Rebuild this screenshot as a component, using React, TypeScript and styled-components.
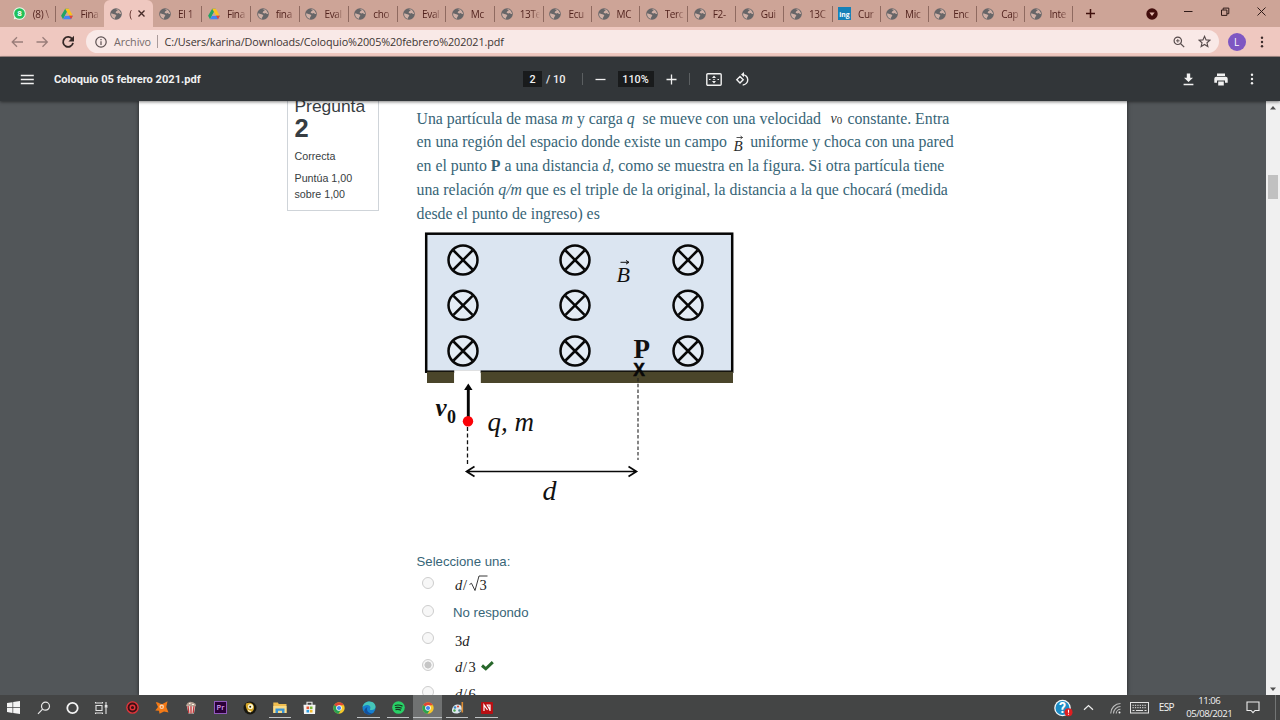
import React from "react";
import styled, { createGlobalStyle } from "styled-components";

const Global = createGlobalStyle`
  * { box-sizing: border-box; }
  body { margin: 0; overflow: hidden; background: #525659; }
  svg { display: block; flex: none; }
`;

const uiFont = `"Open Sans", "Noto Sans", sans-serif`;

const Screen = styled.div`
  width: 1280px;
  height: 720px;
  display: flex;
  flex-direction: column;
  overflow: hidden;
`;

/* ---------- Browser chrome ---------- */
const TabStrip = styled.div`
  height: 27px;
  flex: none;
  display: flex;
  padding-left: 6.7px;
  background: #cda497;
`;

const Tab = styled.div<{ $w: number; $active?: boolean; $line?: boolean }>`
  width: ${(p) => p.$w}px;
  flex: none;
  display: flex;
  align-items: center;
  padding-left: 6px;
  background: ${(p) => (p.$active ? "#efc8c0" : "transparent")};
  border-radius: 6px 6px 0 0;
  position: relative;
  &::after {
    content: "";
    display: ${(p) => (p.$line ? "block" : "none")};
    position: absolute;
    right: -0.5px;
    top: 6px;
    width: 1px;
    height: 16px;
    background: #8f6a60;
  }
`;

const TabTitle = styled.span<{ $w?: number }>`
  width: ${(p) => p.$w ?? 20}px;
  margin-left: 7px;
  overflow: hidden;
  white-space: nowrap;
  font: 10px/16px ${uiFont};
  letter-spacing: -0.35px;
  color: #52231e;
  mask-image: linear-gradient(90deg, #000 55%, transparent 100%);
`;

const StripControls = styled.div`
  flex: 1;
  display: flex;
  align-items: center;
`;

const AddressBar = styled.div`
  height: 30px;
  flex: none;
  display: flex;
  align-items: center;
  padding-left: 10px;
  background: #efc8c0;
  border-bottom: 1px solid #a48b87;
`;

const NavButtons = styled.div`
  width: 76px;
  display: flex;
  align-items: center;
  gap: 11px;
`;

const Omnibox = styled.div`
  width: 1133px;
  height: 23px;
  display: flex;
  align-items: center;
  padding: 0 8px 0 9px;
  border-radius: 12px;
  background: #f9e9e7;
  font: 10.8px/20px ${uiFont};
  color: #3d3533;
  white-space: nowrap;
`;

const Scheme = styled.span`
  width: 42.5px;
  margin-left: 7px;
  letter-spacing: -0.1px;
  color: #75696a;
`;

const Divider = styled.i<{ $h: number; $c: string }>`
  width: 1px;
  height: ${(p) => p.$h}px;
  background: ${(p) => p.$c};
`;

const Url = styled.span`
  flex: 1;
  margin-left: 7px;
  letter-spacing: -0.095px;
`;

const Avatar = styled.span`
  width: 18px;
  height: 18px;
  margin: 0 10.5px 0 8.5px;
  border-radius: 50%;
  background: #7e57c2;
  color: #fff;
  font: 10px/18px ${uiFont};
  text-align: center;
`;

/* ---------- PDF toolbar ---------- */
const PdfBar = styled.div`
  height: 44px;
  flex: none;
  display: flex;
  align-items: center;
  padding-left: 20px;
  background: #323639;
  color: #f1f1f1;
  font: 500 11.4px/16px Roboto, sans-serif;
  box-shadow: 0 1px 3px rgba(0, 0, 0, 0.5);
  position: relative;
`;

const DocName = styled.span`
  width: 489px;
  padding: 2px 0 0 20px;
  font-weight: 700;
  font-size: 11.1px;
`;

const Field = styled.span<{ $w: number }>`
  width: ${(p) => p.$w}px;
  height: 16px;
  background: #191b1c;
  text-align: center;
  font-size: 10.8px;
  line-height: 17px;
`;

const PageTotal = styled.span`
  width: 36px;
  padding: 1px 0 0 4px;
  font-size: 11px;
`;

const Spacer = styled.span<{ $w: number }>`
  width: ${(p) => p.$w}px;
  flex: none;
`;

/* ---------- Document ---------- */
const Viewer = styled.div`
  height: 594px;
  flex: none;
  display: flex;
  overflow: hidden;
  background: #525659;
`;

const Gutter = styled.div<{ $w: number }>`
  width: ${(p) => p.$w}px;
  flex: none;
`;

const Paper = styled.main`
  width: 988px;
  flex: none;
  display: flex;
  align-items: flex-start;
  padding-left: 148px;
  background: #fff;
  box-shadow: 0 0 4px rgba(0, 0, 0, 0.6);
  font-family: "Liberation Sans", Arial, sans-serif;
`;

const QuestionCard = styled.aside`
  width: 92px;
  height: 110px;
  overflow: hidden;
  padding-left: 6.5px;
  border: 1px solid #cfd4d9;
  border-top: 0;
  color: #373d42;
  font-size: 10.7px;
  line-height: 16px;
`;

const QuestionTitle = styled.div`
  height: 13px;
  font-size: 17.4px;
  line-height: 20px;
  margin-top: -5px;
`;

const QuestionNumber = styled.div`
  font-size: 25.5px;
  font-weight: 700;
  line-height: 30px;
  margin-top: 3.5px;
`;

const CardText = styled.div<{ $gap: number }>`
  margin-top: ${(p) => p.$gap}px;
`;

const Content = styled.section`
  margin-left: 37.5px;
  padding-top: 5.5px;
  color: #376577;
`;

const Line = styled.p`
  height: 23.85px;
  margin: 0;
  white-space: pre;
  font: 15.83px/23.85px "Liberation Serif", "Times New Roman", serif;
`;

const Formula = styled.svg`
  display: inline-block;
  vertical-align: top;
  overflow: visible;
`;

const Figure = styled.svg`
  margin-top: 4.3px;
  margin-left: -6.5px;
`;

const Prompt = styled.div`
  margin-top: 24px;
  height: 19px;
  font-size: 13.2px;
  line-height: 20px;
`;

const Choice = styled.div<{ $h: number }>`
  height: ${(p) => p.$h}px;
  display: flex;
  align-items: center;
  padding-left: 5.5px;
  font-size: 13.2px;
`;

const Radio = styled.span<{ $on?: boolean }>`
  width: 12px;
  height: 12px;
  margin-right: 19px;
  border: 1px solid #cdcdcd;
  border-radius: 50%;
  background: ${(p) =>
    p.$on ? "radial-gradient(circle, #c6c6c6 0 3.2px, #f6f6f6 3.8px)" : "#f7f7f7"};
`;

const ChoiceLabel = styled.span`
  padding-top: 3px;
`;

const Scrollbar = styled.div`
  width: 14px;
  margin-left: auto;
  display: flex;
  flex-direction: column;
  align-items: center;
  padding: 5px 0 4px;
  background: #f0f0f0;
`;

const Thumb = styled.i`
  width: 10px;
  height: 24px;
  margin: 65px 0 auto;
  background: #c1c1c1;
`;

/* ---------- Taskbar ---------- */
const Taskbar = styled.footer`
  height: 25px;
  flex: none;
  display: flex;
  background: #444545;
  color: #f2f2f2;
`;

const TaskSlot = styled.div<{ $open?: boolean; $active?: boolean }>`
  width: 29.56px;
  flex: none;
  display: flex;
  align-items: center;
  justify-content: center;
  background: ${(p) => (p.$active ? "#707272" : "transparent")};
  position: relative;
  &::after {
    content: "";
    display: ${(p) => (p.$open ? "block" : "none")};
    position: absolute;
    left: ${(p) => (p.$active ? 0 : 3.5)}px;
    right: ${(p) => (p.$active ? 0 : 3.5)}px;
    bottom: 2px;
    height: 1.5px;
    background: #bfc2c4;
  }
`;

const Apps = styled.div`
  display: flex;
  width: 1054px;
  margin-left: -0.8px;
`;

const Tray = styled.div`
  flex: 1;
  display: flex;
  align-items: center;
  font: 9.6px/12.6px ${uiFont};
`;

const Lang = styled.span`
  width: 26.5px;
  margin-left: 9.5px;
  font-size: 10px;
  letter-spacing: -0.6px;
`;

const Clock = styled.div`
  width: 48px;
  text-align: center;
  white-space: nowrap;
  font-size: 9.6px;
  letter-spacing: -0.5px;
`;

/* ---------- Icons ---------- */
const Globe = () => (
  <svg width="12" height="12" viewBox="0 0 12 12">
    <circle cx="6" cy="6" r="5.800" fill="#676668" />
    <path d="M1.300 5.200 3.400 6l2 .5 1 1.300-1.200 1.100-.2 1.800C2.800 10.300 1.200 8.500 1.100 6.500zM5.500 1.400l1.700.1.400.9-1.500 1-.5 1.300 1.700.7 1.600-.300 1 1 1.200-.100C10.600 3.600 9.200 1.200 6.500 1z" fill="#cfb0a6" />
  </svg>
);

const DriveIcon = () => (
  <svg width="12" height="12" viewBox="0 0 12 12">
    <path d="M4.200.8h3.600L4 7.600 2 11.200.1 7.800z" fill="#21a464" />
    <path d="M4.200.8h3.600l4.100 7H8.100z" fill="#fbc31c" />
    <path d="M4.100 7.800h7.800L10 11.200H2z" fill="#4285f4" />
    <path d="M8.100 7.800h3.800L10 11.200z" fill="#e94335" />
    <path d="M6 4.300 7.900 7.800H4z" fill="#cda497" />
  </svg>
);

const WhatsAppIcon = () => (
  <svg width="13" height="13" viewBox="0 0 13 13">
    <circle cx="6.500" cy="6.500" r="6.300" fill="#e9fbea" />
    <path d="M.7 12.500 1.500 9l2 2.400z" fill="#e9fbea" />
    <circle cx="6.500" cy="6.500" r="5.300" fill="#20c05a" />
    <text x="6.500" y="9.300" textAnchor="middle" fontFamily="Roboto, sans-serif" fontWeight="700" fontSize="8" fill="#fff">8</text>
  </svg>
);

const IngIcon = () => (
  <svg width="13" height="13" viewBox="0 0 13 13">
    <rect width="13" height="13" fill="#1581b8" />
    <text x="6.500" y="9.600" textAnchor="middle" fontFamily="Open Sans, sans-serif" fontWeight="700" fontSize="6.800" fill="#fff">ing</text>
  </svg>
);

const ChromeIcon = () => (
  <svg width="12" height="12" viewBox="0 0 12 12">
    <circle cx="6" cy="6" r="5.700" fill="#f6c829" />
    <path d="M6 6 1.100 3.100A5.700 5.700 0 0 1 11 3.300H6z" fill="#e04535" />
    <path d="M6 6 1.100 3.100A5.700 5.700 0 0 0 5.500 11.700L8.300 7.300z" fill="#2aa352" />
    <circle cx="6" cy="6" r="2.800" fill="#fff" />
    <circle cx="6" cy="6" r="2.100" fill="#4585ee" />
  </svg>
);

const tabs: [string, string][] = [
  ["wa", "(8) \\"], ["drive", "Fina"], ["active", "("], ["globe", "El 1"],
  ["drive", "Fina"], ["globe", "fina"], ["globe", "Eval"], ["globe", "cho"],
  ["globe", "Eval"], ["globe", "Mc"], ["globe", "13Te"], ["globe", "Ecu"],
  ["globe", "MC"], ["globe", "Terc"], ["globe", "F2-"], ["globe", "Gui"],
  ["globe", "13C"], ["ing", "Cur"], ["globe", "Mic"], ["globe", "Enc"],
  ["globe", "Cap"], ["globe", "Inte"],
];

const tabIcon = (kind: string) =>
  kind === "wa" ? <WhatsAppIcon /> : kind === "drive" ? <DriveIcon /> : kind === "ing" ? <IngIcon /> : <Globe />;

function BrowserTabs() {
  return (
    <TabStrip>
      {tabs.map(([kind, title], i) => (
        <Tab key={i} $w={i < 11 ? 48.8 : 48.1} $active={kind === "active"} $line={i !== 1 && i !== 2}>
          {tabIcon(kind)}
          {kind === "active" ? (
            <>
              <TabTitle $w={4}>{title}</TabTitle>
              <Spacer $w={3.5} />
              <svg width="9" height="9" viewBox="0 0 9 9">
                <path d="m1.500 1.500 6 6m0-6-6 6" stroke="#472c29" strokeWidth="1.400" />
              </svg>
            </>
          ) : (
            <TabTitle>{title}</TabTitle>
          )}
        </Tab>
      ))}
      <StripControls>
        <Spacer $w={12.5} />
        <svg width="11" height="11" viewBox="0 0 11 11"><path d="M5.500 1v9M1 5.500h9" stroke="#40100d" strokeWidth="1.500" /></svg>
        <Spacer $w={50.5} />
        <svg width="12" height="12" viewBox="0 0 12 12">
          <circle cx="6" cy="6" r="5.700" fill="#420d0c" />
          <path d="M3.400 4.500h5.200L6 8z" fill="#e3b9ae" />
        </svg>
        <Spacer $w={25.5} />
        <svg width="90" height="18" viewBox="0 0 90 18" fill="none" stroke="#2f1b18">
          <path d="M0 6.500h8.500M37.500 5h5.400v5.400h-5.400zM39.200 4.800V3.100h5.600v5.600h-1.700M73.500 2.500l8 8m0-8-8 8" />
        </svg>
      </StripControls>
    </TabStrip>
  );
}

const Kebab = ({ color }: { color: string }) => (
  <svg width="4" height="12" viewBox="0 0 4 12" fill={color}>
    <circle cx="2" cy="1.700" r="1.200" /><circle cx="2" cy="6" r="1.200" /><circle cx="2" cy="10.300" r="1.200" />
  </svg>
);

function BrowserToolbar() {
  return (
    <AddressBar>
      <NavButtons>
        <svg width="14" height="12" viewBox="0 0 14 12" fill="none" stroke="#997d79" strokeWidth="1.300"><path d="M13 6H2.500M7 1.200 2.200 6 7 10.800" /></svg>
        <svg width="14" height="12" viewBox="0 0 14 12" fill="none" stroke="#997d79" strokeWidth="1.300"><path d="M1.500 6H12M7.500 1.200 12.300 6l-4.800 4.800" /></svg>
        <svg width="16" height="14" viewBox="-1 0 16 14" fill="none" stroke="#352826" strokeWidth="1.800">
          <path d="M11.300 4.200A5 5 0 1 0 12 7.800" /><path d="M13 .8v5.600H7.400z" fill="#352826" stroke="none" />
        </svg>
      </NavButtons>
      <Omnibox>
        <svg width="12" height="12" viewBox="0 0 12 12" fill="none" stroke="#5c5051" strokeWidth="1.200">
          <circle cx="6" cy="6" r="5.200" /><path d="M6 5.300v3.600M6 2.900v1.400" />
        </svg>
        <Scheme>Archivo</Scheme>
        <Divider $h={13} $c="#aa9b9b" />
        <Url>C:/Users/karina/Downloads/Coloquio%2005%20febrero%202021.pdf</Url>
        <svg width="12" height="12" viewBox="0 0 12 12" fill="none" stroke="#574b4c" strokeWidth="1.200">
          <circle cx="4.800" cy="4.800" r="3.700" /><path d="m7.500 7.500 3.700 3.700" /><path d="M3 4.800h3.600M4.800 3v3.600" strokeWidth=".9" />
        </svg>
        <Spacer $w={13.5} />
        <svg width="13" height="13" viewBox="0 0 24 24" fill="none" stroke="#574b4c" strokeWidth="2.100">
          <path d="m12 2.500 2.900 6.500 7 .7-5.300 4.700 1.600 7L12 17.600l-6.200 3.800 1.600-7L2.100 9.700l7-.7z" />
        </svg>
      </Omnibox>
      <Avatar>L</Avatar>
      <Spacer $w={4} />
      <Kebab color="#3b2b29" />
    </AddressBar>
  );
}

function PdfToolbar() {
  return (
    <PdfBar>
      <svg width="14" height="11" viewBox="0 0 14 11" stroke="#f1f1f1" strokeWidth="1.500"><path d="M.8 1.500h13M.8 5.500h13M.8 9.500h13" /></svg>
      <DocName>Coloquio 05 febrero 2021.pdf</DocName>
      <Field $w={19}>2</Field>
      <PageTotal>/&nbsp;10</PageTotal>
      <Spacer $w={3.5} />
      <Divider $h={12} $c="#5b5f61" />
      <Spacer $w={12} />
      <svg width="11" height="11" viewBox="0 0 11 11" stroke="#f1f1f1" strokeWidth="1.300"><path d="M.5 5.500h10" /></svg>
      <Spacer $w={12} />
      <Field $w={36}>110%</Field>
      <Spacer $w={12} />
      <svg width="11" height="11" viewBox="0 0 11 11" stroke="#f1f1f1" strokeWidth="1.300"><path d="M.5 5.500h10M5.500.5v10" /></svg>
      <Spacer $w={12} />
      <Divider $h={12} $c="#5b5f61" />
      <Spacer $w={16} />
      <svg width="16" height="13" viewBox="0 0 16 13">
        <rect x=".8" y=".8" width="14.400" height="11.400" rx="1" fill="none" stroke="#f1f1f1" strokeWidth="1.400" />
        <path d="M8 2.500 10 5H6zM8 10.500 10 8H6zM3 5.900h1.500v1.200H3zM11.500 5.900H13v1.200h-1.500zM7.300 5.900h1.400v1.200H7.300z" fill="#f1f1f1" />
      </svg>
      <Spacer $w={13} />
      <svg width="15" height="15" viewBox="0 0 15 15" fill="none" stroke="#f1f1f1" strokeWidth="1.400">
        <path d="m5 4.500 3.200 3.200L5 10.900 1.800 7.700zM7.400 2.600a5.200 5.200 0 1 1 .3 10.400" /><path d="M9 0v5.200L6 2.600z" fill="#f1f1f1" stroke="none" />
      </svg>
      <Spacer $w={433.5} />
      <svg width="11" height="13" viewBox="0 0 11 13" fill="#f1f1f1"><path d="M3.800.5h3.400v4.300H10L5.500 9 1 4.800h2.800zM.6 10.800h9.800v1.400H.6z" /></svg>
      <Spacer $w={19.5} />
      <svg width="14" height="13" viewBox="0 0 14 13" fill="#f1f1f1">
        <path d="M3 .4h8v2.500H3zM2.300 3.700h9.400a2 2 0 0 1 2 2v4H11V7.500H3v2.200H.3v-4a2 2 0 0 1 2-2z" /><path d="M4.200 8.500h5.600v4H4.200z" />
      </svg>
      <Spacer $w={22.5} />
      <Kebab color="#f1f1f1" />
    </PdfBar>
  );
}

const VectorB = () => (
  <Formula width="11.500" height="23" viewBox="-2.500 0 11.500 23">
    <text x="0" y="20.500" fontFamily="Liberation Serif, serif" fontStyle="italic" fontSize="15" fill="#2a2a2a">B</text>
    <path d="M3 7.500h6m-2-1.500 2 1.500-2 1.500" stroke="#2a2a2a" strokeWidth=".8" fill="none" />
  </Formula>
);

const SpeedSymbol = () => (
  <Formula width="14.500" height="23" viewBox="-1.500 0 14.500 23">
    <g fontFamily="Liberation Serif, serif" fill="#333">
      <text x="0" y="15.500" fontStyle="italic" fontSize="14">v</text>
      <text x="6.300" y="17" fontSize="11">0</text>
    </g>
  </Formula>
);

const fieldXs = [463, 575, 688];
const fieldYs = [260, 305.3, 351];

/* Uniform magnetic field region with the particle's entry point and impact point P */
const FieldDiagram = () => (
  <Figure width="330" height="298" viewBox="410 230 330 298">
    <rect x="426.200" y="233.700" width="306" height="138" fill="#dbe5f1" stroke="#050505" strokeWidth="2.500" />
    <path d="M427 371.800h27.200v11.300H427zM480.600 371.800H733v11.300H480.600z" fill="#4a452a" />
    <path d="M454.200 370.200h26.400V384h-26.400z" fill="#fff" />
    <g stroke="#080808" strokeWidth="2.500" fill="#e3ebf4">
      {fieldYs.flatMap((y) =>
        fieldXs.map((x) => (
          <g key={`${x}-${y}`}>
            <circle cx={x} cy={y} r="14.500" />
            <path d={`M${x - 9.5} ${y - 9.5}l19 19m0-19-19 19`} />
          </g>
        ))
      )}
    </g>
    <g fontFamily="Liberation Serif, serif" fill="#111">
      <text x="616.500" y="281.500" fontStyle="italic" fontSize="22">B</text>
      <text x="633.500" y="357.800" fontWeight="700" fontSize="27">P</text>
      <text x="435.500" y="416" fontWeight="700" fontStyle="italic" fontSize="25">v</text>
      <text x="447" y="422.500" fontWeight="700" fontSize="18">0</text>
      <text x="487.500" y="430.500" fontStyle="italic" fontSize="27">q, m</text>
      <text x="542.500" y="499.800" fontStyle="italic" fontSize="28">d</text>
    </g>
    <text x="633.300" y="376" fontFamily="Liberation Sans, sans-serif" fontWeight="700" fontSize="17.500" fill="#080808" stroke="#080808" strokeWidth=".5">X</text>
    <path d="M620.500 262.300h8m-2.500-1.800 3 1.800-3 1.800" stroke="#111" fill="none" />
    <path d="M467.500 427v38" stroke="#111" strokeWidth="1.300" strokeDasharray="4 2.600" />
    <path d="M638 378v82" stroke="#222" strokeWidth="1.100" strokeDasharray="3.500 2.200" />
    <path d="M468.300 418v-29" stroke="#050505" strokeWidth="2.900" />
    <path d="M468.300 383.500l4.200 6.500h-8.400z" fill="#050505" />
    <circle cx="468" cy="421.300" r="5.200" fill="#fb0207" />
    <path d="M467 471.500h169M474.500 466.500l-8 5 8 5M628.500 466.500l8 5-8 5" stroke="#080808" strokeWidth="1.700" fill="none" />
  </Figure>
);

const MathLabel = ({ text, root, base = 16.5 }: { text: React.ReactNode; root?: boolean; base?: number }) => (
  <svg width="36" height="20" viewBox="0 0 36 20">
    <text x="2" y={base} fontFamily="Liberation Serif, serif" fontSize="14.500" fill="#222">{text}</text>
    {root && (
      <>
        <path d="M16.500 11.500l2-1.200 3.500 7.200 4-14.500h8.500" stroke="#222" strokeWidth=".9" fill="none" />
        <text x="26.500" y={base} fontFamily="Liberation Serif, serif" fontSize="14.500" fill="#222">3</text>
      </>
    )}
  </svg>
);

const It = ({ children }: { children: string }) => <tspan fontStyle="italic">{children}</tspan>;

function Document() {
  return (
    <Viewer>
      <Gutter $w={139} />
      <Paper>
        <QuestionCard>
          <QuestionTitle>Pregunta</QuestionTitle>
          <QuestionNumber>2</QuestionNumber>
          <CardText $gap={5}>Correcta</CardText>
          <CardText $gap={6}>Puntúa 1,00<br />sobre 1,00</CardText>
        </QuestionCard>
        <Content>
          <Line>Una partícula de masa <i>m</i> y carga <i>q</i>  se mueve con una velocidad  <SpeedSymbol /> constante. Entra</Line>
          <Line>en una región del espacio donde existe un campo <VectorB />{"  "}uniforme y choca con una pared</Line>
          <Line>en el punto <b>P</b> a una distancia <i>d,</i> como se muestra en la figura. Si otra partícula tiene</Line>
          <Line>una relación <i>q/m</i> que es el triple de la original, la distancia a la que chocará (medida</Line>
          <Line>desde el punto de ingreso) es</Line>
          <FieldDiagram />
          <Prompt>Seleccione una:</Prompt>
          <Choice $h={24}><Radio /><MathLabel root text={<><It>d</It><tspan x="10">/</tspan></>} /></Choice>
          <Choice $h={31}><Radio /><ChoiceLabel>No respondo</ChoiceLabel></Choice>
          <Choice $h={24}><Radio /><MathLabel base={17.5} text={<>3<It>d</It></>} /></Choice>
          <Choice $h={30}>
            <Radio $on />
            <MathLabel text={<><It>d</It><tspan x="10">/</tspan><tspan x="15.500">3</tspan></>} />
            <Formula width="13" height="13" viewBox="8 -1 13 13"><path d="m1 5.500 3.800 3.300 7-6.600" fill="none" stroke="#27672b" strokeWidth="3" /></Formula>
          </Choice>
          <Choice $h={24}><Radio /><MathLabel text={<><It>d</It><tspan x="10">/</tspan><tspan x="15.500">6</tspan></>} /></Choice>
        </Content>
      </Paper>
      <Scrollbar>
        <svg width="6" height="4" viewBox="0 0 6 4"><path d="M3 0 6 3.500H0z" fill="#505050" /></svg>
        <Thumb />
        <svg width="6" height="4" viewBox="0 0 6 4"><path d="M3 4 6 .5H0z" fill="#505050" /></svg>
      </Scrollbar>
    </Viewer>
  );
}

function WindowsTaskbar() {
  return (
    <Taskbar>
      <Apps>
        <TaskSlot><svg width="13" height="13" viewBox="0 0 13 13" fill="#f4f4f4"><path d="M0 2l5.500-.8v5H0zM6.200 1.100 13 0v6.200H6.200zM0 6.900h5.500v5L0 11.100zM6.200 6.900H13V13l-6.800-1z" /></svg></TaskSlot>
        <TaskSlot><svg width="14" height="14" viewBox="0 0 14 14" fill="none" stroke="#e8e8e8" strokeWidth="1.200"><circle cx="8.500" cy="5.200" r="4" /><path d="M5.600 8.200 1 12.800" /></svg></TaskSlot>
        <TaskSlot><svg width="14" height="14" viewBox="0 0 14 14" fill="none" stroke="#f4f4f4" strokeWidth="1.800"><circle cx="6.500" cy="7" r="5.200" /></svg></TaskSlot>
        <TaskSlot><svg width="18" height="14" viewBox="1.500 0 14 14" fill="none" stroke="#e4e4e4" strokeWidth="1.100"><path d="M.5 2h8M1.500 4.500h6v5h-6zM.5 12h8M1 1v1.500M8 1v1.500M1 11.500V13M8 11.500V13M11.500 1v3M11.500 7v6" /><path d="M10.800 4.500h1.600v1.600h-1.600z" fill="#eee" /></svg></TaskSlot>
        <TaskSlot><svg width="13" height="13" viewBox="0 0 13 13"><circle cx="6.500" cy="6.500" r="6.300" fill="#e3343a" /><circle cx="6.500" cy="6.500" r="4.900" fill="#3e1115" /><circle cx="6.500" cy="6.500" r="2.300" fill="none" stroke="#e3343a" strokeWidth="1.400" /></svg></TaskSlot>
        <TaskSlot><svg width="14" height="13" viewBox="0 0 14 13"><path d="M.8 1.300C3.500.5 5 3.500 7.500 3L12.500.2 11.300 6l2.200 5.500-4.500-1-4.500 2.300-.5-3L.3 9.500 3 6z" fill="#f47a16" /><circle cx="6.700" cy="5.800" r="2.300" fill="#fbd3b0" /><circle cx="6.700" cy="6" r="1" fill="#f47a16" /></svg></TaskSlot>
        <TaskSlot><svg width="12" height="13" viewBox="0 0 12 13"><path d="M1.500 4h9L9 12.500H3.500z" fill="#eadfd7" /><path d="m3 5 .8 7M6 5v7.500M9 5l-.8 7" stroke="#c3363a" strokeWidth="1.300" /><path d="M1 4.500 2.500 2 5 .8l3 .5 2.500 1.500.5 2-4 .7z" fill="#b6a294" /><path d="M4 2.500h1.500M7 3.500h2" stroke="#fff4e2" /></svg></TaskSlot>
        <TaskSlot><svg width="13" height="13" viewBox="0 0 13 13"><rect x=".5" y=".5" width="12" height="12" fill="#2b0038" stroke="#9159bd" /><text x="6.500" y="9.200" textAnchor="middle" fontFamily="Open Sans, sans-serif" fontSize="7.500" fontWeight="600" fill="#d6a0f4">Pr</text></svg></TaskSlot>
        <TaskSlot><svg width="14" height="14" viewBox="0 0 14 14"><circle cx="7" cy="7" r="6.500" fill="#17160f" /><path d="M3 2.500C6 .5 11 2 11 6.500S7 12 5.500 11 2 5 3 2.500z" fill="#d4a62b" /><circle cx="7.500" cy="5.500" r="2.600" fill="#fbf5cf" /><circle cx="7.200" cy="5.700" r="1" fill="#2b260f" /><path d="M5 9.500 8 11" stroke="#fff" /></svg></TaskSlot>
        <TaskSlot $open><svg width="14" height="12" viewBox="0 0 14 12"><path d="M.3.5h4.500l1 1.500h7.700v9H.3z" fill="#f0bd4f" /><path d="M.3 4h13.200v7H.3z" fill="#f9dc8a" /><path d="M2.500 11V6.500h9V11H9V8.700H5V11z" fill="#3b95d6" /></svg></TaskSlot>
        <TaskSlot><svg width="13" height="14" viewBox="0 0 13 14"><path d="M4 4V1.200h5V4" fill="none" stroke="#eee" strokeWidth="1.100" /><path d="M.5 3.700h12L12 13H1z" fill="#f4f4f4" /><path d="M3.500 5.500h2.600v2.600H3.500z" fill="#e85432" /><path d="M6.900 5.500h2.600v2.600H6.900z" fill="#79b936" /><path d="M3.500 8.900h2.600v2.600H3.500z" fill="#2f9ee2" /><path d="M6.900 8.900h2.600v2.600H6.900z" fill="#f4b92b" /></svg></TaskSlot>
        <TaskSlot><ChromeIcon /></TaskSlot>
        <TaskSlot $open><svg width="14" height="14" viewBox="0 0 14 14"><circle cx="7" cy="7" r="6.500" fill="#1680cf" /><path d="M.6 6C1.500 2 4.500.5 7.500.5c4 0 6.200 3 6 5.500-.2 2.200-2 3.200-4.300 3-1.500-.2-1.500-.8-.9-1.600C9 5.500 7 4 5 4S1.500 5 .6 6z" fill="#45c6b9" /><path d="M5.500 6c-1.500 3 .5 6.500 5 6.200C8 14 4.500 13.800 2.700 11.500 1.600 9.500 3 7 5.500 6z" fill="#14509c" /></svg></TaskSlot>
        <TaskSlot $open><svg width="13" height="13" viewBox="0 0 13 13"><circle cx="6.500" cy="6.500" r="6.300" fill="#28d066" /><path d="M2.800 4.500c2.500-.8 5.500-.5 7.700.6M3.200 6.700c2.200-.6 4.500-.4 6.500.6M3.500 8.700c1.800-.4 3.800-.3 5.500.6" stroke="#17331f" strokeWidth="1.200" fill="none" /></svg></TaskSlot>
        <TaskSlot $open $active><ChromeIcon /></TaskSlot>
        <TaskSlot $open><svg width="13" height="14" viewBox="0 0 13 14"><path d="M6 3.500c3-.2 5 1.500 5 4s-2 5-5.500 5-5-1.500-4.500-4 2-4.800 5-5z" fill="#dce7ef" /><circle cx="4" cy="6.500" r="1.200" fill="#3c87c8" /><circle cx="7" cy="5.500" r="1.100" fill="#da4a35" /><circle cx="3.500" cy="9.500" r="1.200" fill="#4aa64d" /><circle cx="8.500" cy="9.500" r="1.300" fill="#53808f" /><path d="M11.300 1v10.500" stroke="#dd8d35" strokeWidth="1.600" /></svg></TaskSlot>
        <TaskSlot $open><svg width="12" height="12" viewBox="0 0 12 12"><rect width="12" height="12" rx="1" fill="#b90f13" /><path d="M3 9V3l3.500 5M9 9V3H6.200L9 8" fill="none" stroke="#fff" strokeWidth="1.200" /></svg></TaskSlot>
      </Apps>
      <Tray>
        <svg width="20" height="18" viewBox="0 0 20 18"><circle cx="9.500" cy="9" r="8.300" fill="#f5f8fa" /><circle cx="9.500" cy="9" r="7" fill="#1d8cc5" /><text x="9.500" y="14" textAnchor="middle" fontFamily="Roboto, sans-serif" fontWeight="700" fontSize="14" fill="#fff">?</text><circle cx="15.500" cy="13.300" r="4" fill="#e01e20" /><path d="M15.500 10.800v3M15.500 14.800v1" stroke="#fff" strokeWidth="1.100" /></svg>
        <Spacer $w={10} />
        <svg width="11" height="7" viewBox="0 0 11 7" fill="none" stroke="#eee" strokeWidth="1.200"><path d="m1 5.800 4.500-4.300L10 5.800" /></svg>
        <Spacer $w={15.5} />
        <svg width="11" height="12" viewBox="0 0 11 12" fill="none" stroke="#bdbdbd" strokeWidth="1.100"><path d="M.7 11.500A10 10 0 0 1 10.500 1.500M3.500 11.500a7 7 0 0 1 7-7M6.200 11.500a4.300 4.300 0 0 1 4.300-4.200" /><circle cx="9.500" cy="10.500" r="1" fill="#eee" stroke="none" /></svg>
        <Spacer $w={9.5} />
        <svg width="19" height="12" viewBox="0 0 19 12" fill="none" stroke="#e3e3e3"><rect x=".5" y=".5" width="18" height="10.500" /><path d="M2.500 3.300h14M2.500 5.700h14" strokeDasharray="1.300 1.100" /><path d="M2.500 8.500h2M6 8.500h7M14.500 8.500h2" /></svg>
        <Lang>ESP</Lang>
        <Clock>11:06<br />05/08/2021</Clock>
        <Spacer $w={12.5} />
        <svg width="14" height="13" viewBox="0 0 14 13" fill="none" stroke="#eee" strokeWidth="1.100"><path d="M1 1h12v8.500H9L7 11.700 5 9.500H1z" /></svg>
        <Spacer $w={15.5} />
        <Divider $h={25} $c="#737575" />
      </Tray>
    </Taskbar>
  );
}

export default function App() {
  return (
    <Screen>
      <Global />
      <BrowserTabs />
      <BrowserToolbar />
      <PdfToolbar />
      <Document />
      <WindowsTaskbar />
    </Screen>
  );
}
